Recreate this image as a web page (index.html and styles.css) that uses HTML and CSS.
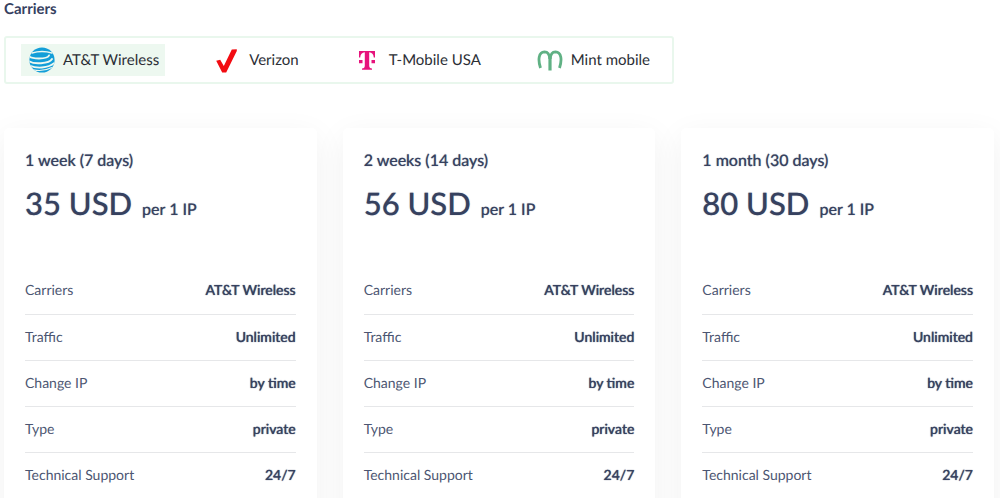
FILE: index.html
```
<!DOCTYPE html>
<html lang="en">
<head>
<meta charset="utf-8">
<meta name="viewport" content="width=device-width, initial-scale=1">
<title>Carriers and prices</title>
<link rel="stylesheet" href="styles.css">
</head>
<body>
<main class="page">
  <fieldset class="carriers">
    <legend class="carriers-title">Carriers</legend>
    <div class="carriers-list">
      <label class="carrier">
        <input class="carrier-input" type="radio" name="carrier" value="att" checked>
        <svg class="carrier-icon" viewBox="0 0 26 26" aria-hidden="true">
          <defs><clipPath id="globe"><circle cx="13" cy="13" r="12.6"/></clipPath></defs>
          <g clip-path="url(#globe)">
            <rect width="26" height="26" fill="#139ed8"/>
            <g fill="none" stroke="#edf8f0" stroke-linecap="round">
              <path d="M3 6Q13 3 23 6" stroke-width="1.400"/>
              <path d="M0 9Q2 11.500 10 11.500Q19 11.300 20 8.500" stroke-width="1.900"/>
              <path d="M0 14.200Q4 16.800 12 16.200Q21 15.500 23 12" stroke-width="1.900"/>
              <path d="M1 18.800Q6 21 13 20.500Q21 19.800 25.500 16" stroke-width="1.800"/>
              <path d="M4 22.800Q14 25 23 20.500" stroke-width="1.200"/>
            </g>
          </g>
        </svg>
        <span>AT&amp;T Wireless</span>
      </label>
      <label class="carrier">
        <input class="carrier-input" type="radio" name="carrier" value="verizon">
        <svg class="carrier-icon" viewBox="0 0 26 26" aria-hidden="true">
          <path d="M1.200 13.800L5.200 12.800L8.800 19L16.800 2.600L21.800 2.200V4L11.200 25.400H7.200Z" fill="#f20c12"/>
        </svg>
        <span>Verizon</span>
      </label>
      <label class="carrier">
        <input class="carrier-input" type="radio" name="carrier" value="tmobile">
        <svg class="carrier-icon" viewBox="0 0 26 26" aria-hidden="true">
          <path d="M4 4H20V10.500H18.800C18.500 7.200 17 5.400 14.200 5.300V18.600C14.200 20.600 15 21.500 17 21.600V22.700H7V21.600C9 21.500 9.800 20.600 9.800 18.600V5.300C7 5.400 5.500 7.200 5.200 10.500H4ZM4 13H7.500V16.200H4ZM16.500 13H20V16.200H16.500Z" fill="#e6137c"/>
        </svg>
        <span>T-Mobile USA</span>
      </label>
      <label class="carrier">
        <input class="carrier-input" type="radio" name="carrier" value="mint">
        <svg class="carrier-icon" viewBox="0 0 26 26" aria-hidden="true">
          <g fill="none" stroke="#60b184">
            <path d="M3.500 21C0.800 13 1.500 5 7.500 4.800C11.500 4.800 12.600 8 12.800 12M13.200 12C13.400 8 14.500 4.800 18.500 4.800C24.500 5 25.200 13 22.500 21" stroke-width="2.800"/>
            <path d="M13 9V23.500" stroke-width="3.200"/>
          </g>
        </svg>
        <span>Mint mobile</span>
      </label>
    </div>
  </fieldset>

  <section class="plans" aria-label="Plans">
    <article class="plan">
      <h2 class="plan-term">1 week (7 days)</h2>
      <p class="plan-price"><span class="plan-amount">35 USD</span> <span class="plan-unit">per 1 IP</span></p>
      <table class="plan-specs">
        <tr><th scope="row">Carriers</th><td>AT&amp;T Wireless</td></tr>
        <tr><th scope="row">Traffic</th><td>Unlimited</td></tr>
        <tr><th scope="row">Change IP</th><td>by time</td></tr>
        <tr><th scope="row">Type</th><td>private</td></tr>
        <tr><th scope="row">Technical Support</th><td>24/7</td></tr>
      </table>
    </article>
    <article class="plan">
      <h2 class="plan-term">2 weeks (14 days)</h2>
      <p class="plan-price"><span class="plan-amount">56 USD</span> <span class="plan-unit">per 1 IP</span></p>
      <table class="plan-specs">
        <tr><th scope="row">Carriers</th><td>AT&amp;T Wireless</td></tr>
        <tr><th scope="row">Traffic</th><td>Unlimited</td></tr>
        <tr><th scope="row">Change IP</th><td>by time</td></tr>
        <tr><th scope="row">Type</th><td>private</td></tr>
        <tr><th scope="row">Technical Support</th><td>24/7</td></tr>
      </table>
    </article>
    <article class="plan">
      <h2 class="plan-term">1 month (30 days)</h2>
      <p class="plan-price"><span class="plan-amount">80 USD</span> <span class="plan-unit">per 1 IP</span></p>
      <table class="plan-specs">
        <tr><th scope="row">Carriers</th><td>AT&amp;T Wireless</td></tr>
        <tr><th scope="row">Traffic</th><td>Unlimited</td></tr>
        <tr><th scope="row">Change IP</th><td>by time</td></tr>
        <tr><th scope="row">Type</th><td>private</td></tr>
        <tr><th scope="row">Technical Support</th><td>24/7</td></tr>
      </table>
    </article>
  </section>
</main>
</body>
</html>
```
FILE: styles.css
```
* {
  box-sizing: border-box;
}

html {
  overflow: hidden;
}

body {
  margin: 0;
  background: #fff;
  color: #36415f;
  font-family: Lato, "Open Sans", sans-serif;
  font-size: 14px;
  line-height: 20px;
  text-rendering: geometricPrecision;
}

.page {
  padding: 0 6px 0 4px;
}

.carriers {
  min-width: 0;
  margin: 0;
  padding: 0;
  border: 0;
}

.carriers-title {
  margin-bottom: 18px;
  padding: 0;
  font-size: 15px;
  font-weight: 700;
  line-height: 18px;
}

.carriers-list {
  display: flex;
  justify-content: space-between;
  max-width: 670px;
  padding: 6px 16px 6px 15px;
  border: 2px solid #e9f7ed;
  border-radius: 3px;
}

.carrier {
  display: flex;
  align-items: center;
  gap: 8px;
  height: 32px;
  padding: 0 6px 0 8px;
  color: #2b2e35;
  font-size: 15px;
  line-height: 18px;
  white-space: nowrap;
  cursor: pointer;
}

.carrier:has(:checked) {
  background: #edf8f0;
}

.carrier-input {
  position: absolute;
  opacity: 0;
}

.carrier-icon {
  width: 26px;
  height: 26px;
}

.plans {
  display: grid;
  grid-template-columns: repeat(3, minmax(0, 1fr));
  gap: 26px;
  margin-top: 44px;
}

.plan {
  padding: 22px 21px;
  border-radius: 5px;
  background: #fff;
  box-shadow: 0 8px 32px rgba(20, 24, 40, 0.06);
}

.plan-term {
  margin: 0;
  font-size: 16px;
  font-weight: 500;
  line-height: 22px;
  text-shadow: 0 0 1px rgba(54, 65, 95, 0.6);
}

.plan-price {
  display: flex;
  align-items: baseline;
  gap: 10px;
  margin: 11px 0 45px;
}

.plan-amount {
  font-size: 31px;
  font-weight: 500;
  line-height: 40px;
  text-shadow: 0 0 1px rgba(54, 65, 95, 0.6);
}

.plan-unit {
  font-size: 16px;
  font-weight: 500;
  text-shadow: 0 0 1px rgba(54, 65, 95, 0.6);
}

.plan-specs {
  width: 100%;
  border-collapse: collapse;
}

.plan-specs th,
.plan-specs td {
  height: 46px;
  padding: 0 0 1px;
  border-bottom: 1px solid #e6e7e9;
}

.plan-specs th {
  color: #4c5672;
  font-weight: 400;
  text-align: left;
}

.plan-specs td {
  font-weight: 500;
  text-align: right;
  text-shadow: 0 0 1px #36415f;
}

.plan-specs tr:last-child > * {
  border-bottom: 0;
}
```
